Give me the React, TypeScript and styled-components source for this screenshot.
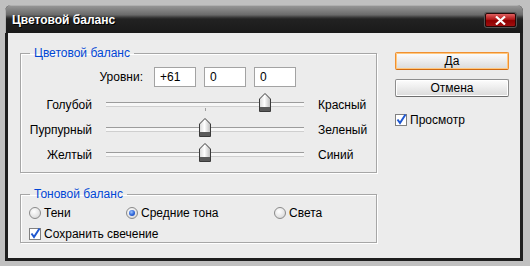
import React from 'react';
import styled, {createGlobalStyle} from 'styled-components';

const GlobalStyle = createGlobalStyle`
  html, body {
    margin: 0;
    background: #c0c0c0;
  }

  body {
    font-family: "Liberation Sans", Arial, sans-serif;
    font-size: 12px;
    color: #000;
  }
`;

const Window = styled.div`
  display: flex;
  flex-direction: column;
  width: 518px;
  height: 256px;
  margin: 5px 0 0 5px;
  background: #1e1e1e;
  border-radius: 6px 6px 0 0;
  overflow: hidden;
`;

const TitleBar = styled.div`
  display: flex;
  align-items: center;
  justify-content: space-between;
  height: 28px;
  padding: 0 7px 0 7px;
  background: linear-gradient(#9a9a9a 0%, #6a6a6a 35%, #3a3a3a 44%, #222 50%, #1a1a1a 100%);
  box-shadow: inset 1px 1px 0 #b0b0b0;
`;

const Title = styled.div`
  color: #fff;
  font-size: 12px;
  font-weight: bold;
  text-shadow: 1px 1px 0 #000;
  padding-top: 1px;
`;

const CloseButton = styled.div`
  display: flex;
  align-items: center;
  justify-content: center;
  width: 29px;
  height: 12px;
  margin-top: 2px;
  border: 1px solid #2a0808;
  border-radius: 2px;
  background: linear-gradient(#e06060 0%, #b01818 45%, #8e0000 55%, #a01010 100%);
  box-shadow: 0 0 0 1px #555;
`;

const Body = styled.div`
  display: flex;
  flex: 1;
  margin: 0 3px 3px 3px;
  padding: 13px 0 0 12px;
  background: #ececec;
`;

const LeftColumn = styled.div`
  display: flex;
  flex-direction: column;
  width: 357px;
`;

const RightColumn = styled.div`
  display: flex;
  flex-direction: column;
  width: 114px;
  margin: 6px 0 0 18px;
`;

const Group = styled.fieldset<{$gapTop?: number}>`
  margin: ${p => p.$gapTop ?? 0}px 0 0 0;
  padding: 0;
  min-inline-size: 0;
  border: 1px solid #a6a6a6;
  box-shadow: 1px 1px 0 #fff, inset 1px 1px 0 #fff;
`;

const Legend = styled.legend`
  margin-left: 9px;
  padding: 0 4px;
  line-height: 14px;
  color: #0046d5;
`;

const LevelsRow = styled.div`
  display: flex;
  align-items: center;
  gap: 8px;
  margin-top: 7px;
`;

const LevelsLabel = styled.div`
  width: 122px;
  margin-right: 3px;
  text-align: right;
`;

const NumberBox = styled.div`
  width: 35px;
  height: 18px;
  padding-left: 5px;
  line-height: 18px;
  border: 1px solid #a3a3a3;
  background: #fff;
`;

const SliderGrid = styled.div`
  display: grid;
  grid-template-columns: 71px 198px auto;
  grid-auto-rows: 25px;
  column-gap: 14px;
  align-items: center;
  margin: 5px 0 5px 0;
`;

const SideLabel = styled.div<{$align: 'left' | 'right'}>`
  text-align: ${p => p.$align};
`;

const Track = styled.div`
  position: relative;
  height: 3px;
  border-top: 1px solid #9c9c9c;
  background: #f7f7f7;
  border-bottom: 1px solid #cfcfcf;
`;

const Tick = styled.div`
  position: absolute;
  left: 50%;
  top: 5px;
  width: 1px;
  height: 3px;
  background: #a0a0a0;
`;

const Thumb = styled.svg`
  position: absolute;
  top: -10px;
  width: 12px;
  height: 19px;
  transform: translateX(-50%);
`;

const ToneRow = styled.div`
  display: grid;
  grid-template-columns: 97px 148px auto;
  height: 16px;
  align-items: center;
  margin: 4px 0 0 8px;
`;

const CheckRow = styled.label<{$top: number; $left: number}>`
  display: flex;
  align-items: center;
  gap: 3px;
  height: 16px;
  margin: ${p => p.$top}px 0 0 ${p => p.$left}px;
`;

const Option = styled.div`
  display: flex;
  align-items: center;
  gap: 3px;
`;

const Radio = styled.div<{$on?: boolean}>`
  position: relative;
  width: 10px;
  height: 10px;
  border: 1px solid #8a8a8a;
  border-radius: 50%;
  background: radial-gradient(circle at 40% 35%, #fff 0%, #e4e4e4 60%, #c8c8c8 100%);

  &::after {
    content: '';
    display: ${p => (p.$on ? 'block' : 'none')};
    position: absolute;
    left: 2px;
    top: 2px;
    width: 6px;
    height: 6px;
    border-radius: 50%;
    background: radial-gradient(circle at 40% 35%, #9cc4ff 0%, #2a62d8 55%, #1a44a8 100%);
  }
`;

const Button = styled.div<{$primary?: boolean}>`
  height: 16px;
  line-height: 16px;
  text-align: center;
  border: 1px solid ${p => (p.$primary ? '#f09030' : '#8e8e8e')};
  border-bottom-color: ${p => (p.$primary ? '#d06a10' : '#6e6e6e')};
  border-radius: 2px;
  background: linear-gradient(#fdfdfd 0%, #ececec 50%, #dadada 100%);
  box-shadow: ${p => (p.$primary ? 'inset 0 0 0 1px #ffc880' : 'inset 0 0 0 1px #fff')};

  & + & {
    margin-top: 9px;
  }
`;

const CheckMark = () => (
  <svg width="12" height="12" viewBox="0 0 12 12" style={{overflow: 'visible'}}>
    <rect x="0.5" y="0.5" width="11" height="11" fill="#fff" stroke="#808080" />
    <path d="M2.5 5.5 L5 9 L10.5 0.5" fill="none" stroke="#2058d0" strokeWidth="2" />
  </svg>
);

const ThumbShape = () => (
  <>
    <defs>
      <linearGradient id="thumbFill" x1="0" x2="1" y1="0" y2="0">
        <stop offset="0" stopColor="#d8d8d8" />
        <stop offset="0.45" stopColor="#ffffff" />
        <stop offset="1" stopColor="#bcbcbc" />
      </linearGradient>
    </defs>
    <path d="M6 0.5 L11.5 6 L11.5 18.5 L0.5 18.5 L0.5 6 Z" fill="url(#thumbFill)" stroke="#3a3a3a" />
    <rect x="1" y="14" width="10" height="4" fill="#5a5a5a" />
  </>
);

interface SliderRowProps {
  left: string;
  right: string;
  value: number;
  tick?: boolean;
}

const SliderRow = ({left, right, value, tick}: SliderRowProps) => (
  <>
    <SideLabel $align="right">{left}</SideLabel>
    <Track>
      {tick && <Tick />}
      <Thumb viewBox="0 0 12 19" style={{left: `${((value + 100) / 200) * 100}%`}}>
        <ThumbShape />
      </Thumb>
    </Track>
    <SideLabel $align="left">{right}</SideLabel>
  </>
);

export default function App() {
  return (
    <>
      <GlobalStyle />
      <Window>
        <TitleBar>
          <Title>Цветовой баланс</Title>
          <CloseButton>
            <svg width="11" height="9" viewBox="0 0 11 9">
              <path d="M1 0.5 L10 8.5 M10 0.5 L1 8.5" stroke="#fff" strokeWidth="2.2" />
            </svg>
          </CloseButton>
        </TitleBar>
        <Body>
          <LeftColumn>
            <Group>
              <Legend>Цветовой баланс</Legend>
              <LevelsRow>
                <LevelsLabel>Уровни:</LevelsLabel>
                <NumberBox>+61</NumberBox>
                <NumberBox>0</NumberBox>
                <NumberBox>0</NumberBox>
              </LevelsRow>
              <SliderGrid>
                <SliderRow left="Голубой" right="Красный" value={61} tick />
                <SliderRow left="Пурпурный" right="Зеленый" value={0} />
                <SliderRow left="Желтый" right="Синий" value={0} />
              </SliderGrid>
            </Group>
            <Group $gapTop={14}>
              <Legend>Тоновой баланс</Legend>
              <ToneRow>
                <Option>
                  <Radio />
                  Тени
                </Option>
                <Option>
                  <Radio $on />
                  Средние тона
                </Option>
                <Option>
                  <Radio />
                  Света
                </Option>
              </ToneRow>
              <CheckRow $top={5} $left={8}>
                <CheckMark />
                Сохранить свечение
              </CheckRow>
            </Group>
          </LeftColumn>
          <RightColumn>
            <Button $primary>Да</Button>
            <Button>Отмена</Button>
            <CheckRow $top={15} $left={0}>
              <CheckMark />
              Просмотр
            </CheckRow>
          </RightColumn>
        </Body>
      </Window>
    </>
  );
}
